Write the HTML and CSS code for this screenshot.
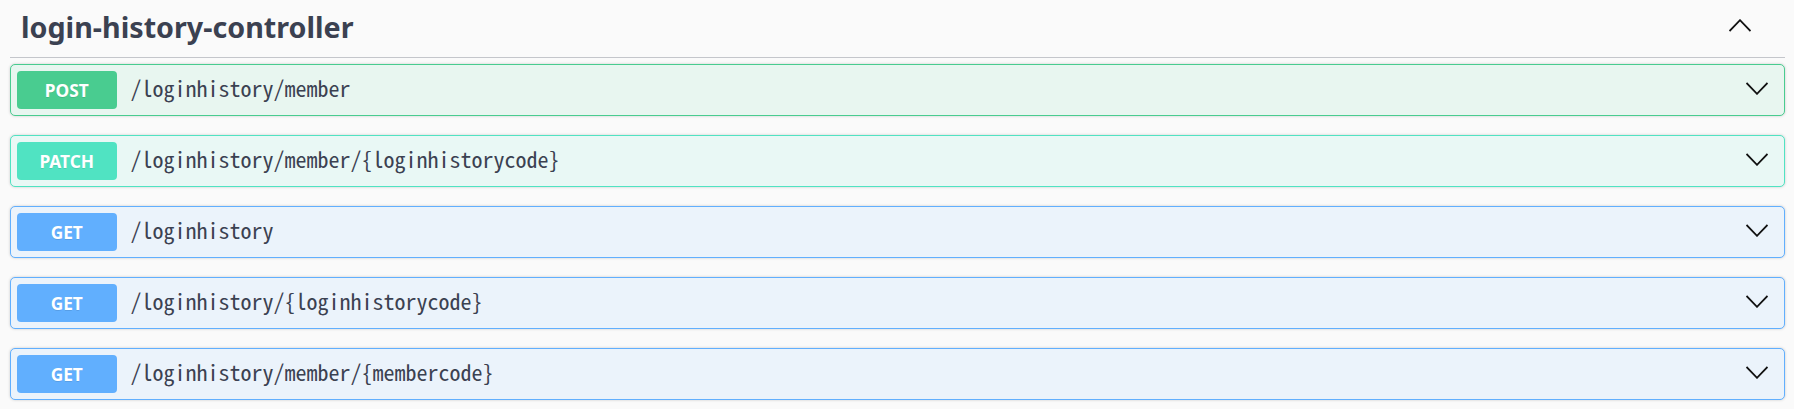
FILE: index.html
```html
<!DOCTYPE html>
<html lang="en">
<head>
<meta charset="utf-8">
<title>login-history-controller</title>
<link rel="stylesheet" href="styles.css">
</head>
<body>
<div class="wrap">
  <div class="tag">
    <h3 class="tag-title">login-history-controller</h3>
    <svg class="arrow-up" width="22" height="13" viewBox="0 0 22 13"><polyline points="0.5,12 11,1.2 21.5,12" /></svg>
  </div>

  <div class="opblock post">
    <span class="method">POST</span>
    <span class="path">/loginhistory/member</span>
    <svg class="arrow" width="22" height="13" viewBox="0 0 22 13"><polyline points="0.5,1 11,11.8 21.5,1" /></svg>
  </div>

  <div class="opblock patch">
    <span class="method">PATCH</span>
    <span class="path">/loginhistory/member/{loginhistorycode}</span>
    <svg class="arrow" width="22" height="13" viewBox="0 0 22 13"><polyline points="0.5,1 11,11.8 21.5,1" /></svg>
  </div>

  <div class="opblock get">
    <span class="method">GET</span>
    <span class="path">/loginhistory</span>
    <svg class="arrow" width="22" height="13" viewBox="0 0 22 13"><polyline points="0.5,1 11,11.8 21.5,1" /></svg>
  </div>

  <div class="opblock get">
    <span class="method">GET</span>
    <span class="path">/loginhistory/{loginhistorycode}</span>
    <svg class="arrow" width="22" height="13" viewBox="0 0 22 13"><polyline points="0.5,1 11,11.8 21.5,1" /></svg>
  </div>

  <div class="opblock get">
    <span class="method">GET</span>
    <span class="path">/loginhistory/member/{membercode}</span>
    <svg class="arrow" width="22" height="13" viewBox="0 0 22 13"><polyline points="0.5,1 11,11.8 21.5,1" /></svg>
  </div>
</div>
</body>
</html>
```

FILE: styles.css
```css
html, body {
  margin: 0;
  padding: 0;
  background: #fafafa;
}

.wrap {
  padding: 0 9px 0 10px;
}

.tag {
  display: flex;
  align-items: center;
  justify-content: space-between;
  box-sizing: border-box;
  height: 58px;
  padding: 0 34px 4.7px 11px;
  border-bottom: 1px solid #c4c6cb;
  margin-bottom: 6.3px;
}

.tag-title {
  margin: 0;
  font-family: "Noto Sans", sans-serif;
  font-weight: 700;
  font-size: 28.7px;
  color: #3b4151;
}

.arrow-up {
  margin-bottom: 1px;
}

.arrow-up polyline,
.arrow polyline {
  fill: none;
  stroke: #111;
  stroke-width: 1.8;
}

.opblock {
  display: flex;
  align-items: center;
  box-sizing: border-box;
  height: 51.5px;
  padding: 0 16px 0 6px;
  margin-bottom: 19.5px;
  border: 1px solid;
  border-radius: 5px;
  box-shadow: 0 0 3px rgba(0, 0, 0, 0.19);
}

.method {
  display: flex;
  align-items: center;
  justify-content: center;
  flex: none;
  width: 99.5px;
  height: 38px;
  border-radius: 4px;
  color: #fff;
  font-family: "Noto Sans", sans-serif;
  font-weight: 700;
  font-size: 17.3px;
  text-shadow: 0 1px 0 rgba(0, 0, 0, 0.1);
}

.path {
  margin-left: 14px;
  margin-bottom: 7px;
  font-family: "Noto Sans Mono CJK KR", "Liberation Mono", monospace;
  font-size: 22px;
  color: #3b4151;
}

.arrow {
  margin-left: auto;
  margin-bottom: 3px;
}

.post {
  background: #e8f6f0;
  border-color: #49cc90;
}
.post .method {
  background: #49cc90;
}

.patch {
  background: #e9f8f5;
  border-color: #50e3c2;
}
.patch .method {
  background: #50e3c2;
}

.get {
  background: #ebf3fb;
  border-color: #61affe;
}
.get .method {
  background: #61affe;
}
```
